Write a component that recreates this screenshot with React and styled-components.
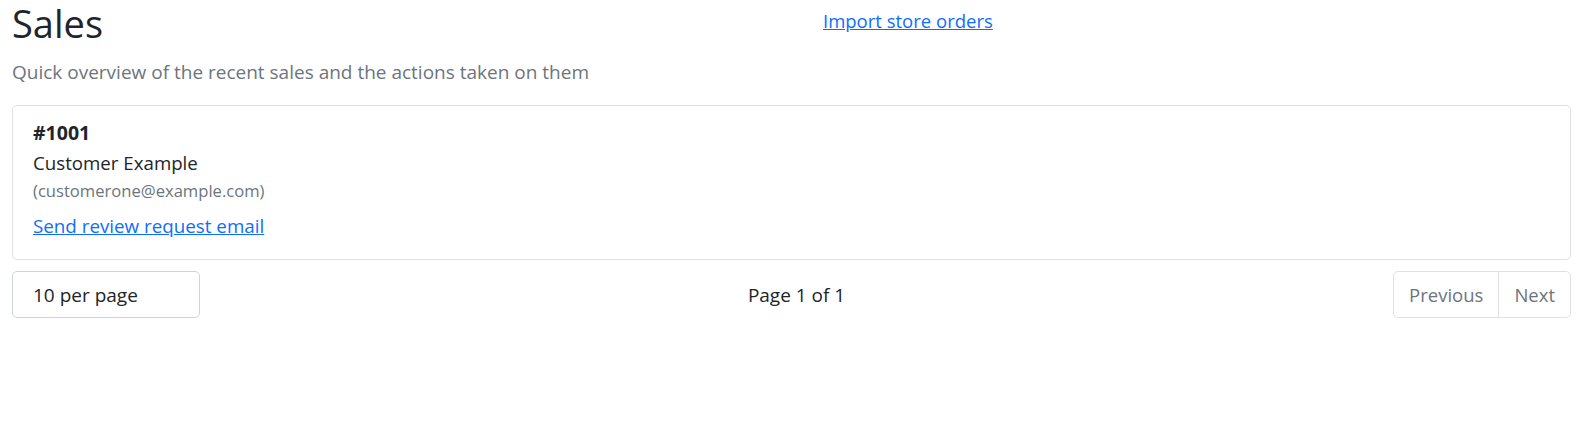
import React from "react";
import styled, { createGlobalStyle } from "styled-components";

const GlobalStyle = createGlobalStyle`
  body {
    margin: 0;
    font-family: "Open Sans", "Noto Sans", sans-serif;
    color: #212529;
    background: #fff;
  }
`;

const sales = [
  {
    id: 1001,
    name: "Customer Example",
    email: "customerone@example.com",
  },
];

const Page = styled.div`
  padding: 0 11px 0 12px;
`;

const Header = styled.div`
  display: flex;
  align-items: flex-start;
`;

const Title = styled.h1`
  margin: 0;
  font-size: 38px;
  font-weight: 400;
  line-height: 46px;
`;

const ImportLink = styled.a`
  margin-left: 720px;
  margin-top: 7px;
  font-size: 18.5px;
  line-height: 28px;
  color: #0d6efd;
  text-decoration: underline;
`;

const Subtitle = styled.p`
  margin: 13px 0 20px;
  font-size: 19px;
  line-height: 26px;
  color: #6c757d;
`;

const Card = styled.div`
  display: flex;
  flex-direction: column;
  align-items: flex-start;
  border: 1px solid #dee2e6;
  border-radius: 5px;
  padding: 12px 20px 20px;
`;

const OrderNo = styled.div`
  font-weight: 700;
  font-size: 19.5px;
  line-height: 29px;
`;

const Customer = styled.div`
  font-size: 18.7px;
  line-height: 32px;
`;

const Email = styled.div`
  font-size: 16.6px;
  line-height: 23px;
  color: #6c757d;
`;

const ActionLink = styled.a`
  margin-top: 11px;
  font-size: 18.8px;
  line-height: 26px;
  color: #0d6efd;
  text-decoration: underline;
`;

const Controls = styled.div`
  display: flex;
  justify-content: space-between;
  align-items: center;
  margin-top: 11px;
`;

const PerPage = styled.div`
  width: 188px;
  height: 47px;
  box-sizing: border-box;
  border: 1px solid #ced4da;
  border-radius: 5px;
  padding: 0 20px;
  display: flex;
  align-items: center;
  font-size: 19px;
`;

const PageInfo = styled.div`
  font-size: 19px;
  line-height: 26px;
`;

const Pager = styled.div`
  display: flex;
  border: 1px solid #dee2e6;
  border-radius: 5px;
  height: 47px;
  box-sizing: border-box;
`;

const PagerButton = styled.span`
  display: flex;
  align-items: center;
  padding: 0 15px;
  font-size: 18.5px;
  color: #6c757d;
  border-left: ${(p) => (p.$first ? "none" : "1px solid #dee2e6")};
`;

export default function App() {
  return (
    <Page>
      <GlobalStyle />
      <Header>
        <Title>Sales</Title>
        <ImportLink href="#">Import store orders</ImportLink>
      </Header>
      <Subtitle>Quick overview of the recent sales and the actions taken on them</Subtitle>
      {sales.map((s) => (
        <Card key={s.id}>
          <OrderNo>#{s.id}</OrderNo>
          <Customer>{s.name}</Customer>
          <Email>({s.email})</Email>
          <ActionLink href="#">Send review request email</ActionLink>
        </Card>
      ))}
      <Controls>
        <PerPage>10 per page</PerPage>
        <PageInfo>Page 1 of 1</PageInfo>
        <Pager>
          <PagerButton $first>Previous</PagerButton>
          <PagerButton>Next</PagerButton>
        </Pager>
      </Controls>
    </Page>
  );
}
